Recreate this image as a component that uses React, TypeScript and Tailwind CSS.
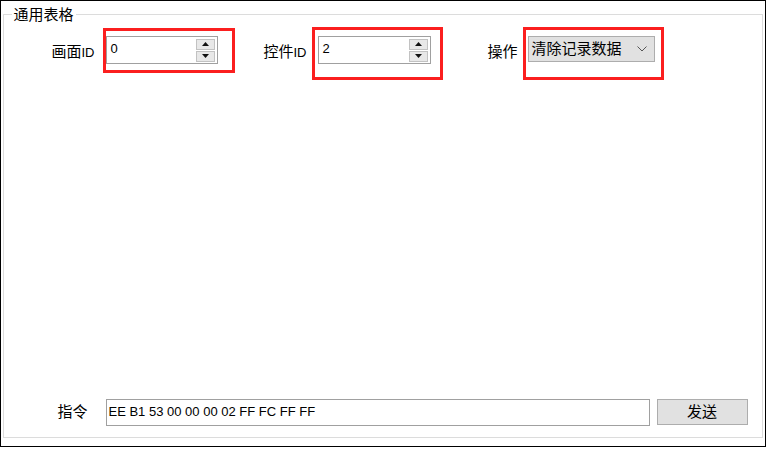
import { useState } from 'react';

const font = { fontFamily: '"Liberation Sans", "Noto Sans CJK SC", sans-serif' };

function SpinBox({ value, width }: { value: string; width: string }) {
  return (
    <div className={`flex h-[28px] ${width} border border-[#a0a0a0] bg-white`}>
      <div className="flex-1 pl-[4px] pt-[4px] text-[13px] leading-[16px] text-black">{value}</div>
      {/* up / down buttons */}
      <div className="mr-[2px] mt-[2px] flex w-[19px] flex-col gap-px">
        <div className="flex h-[11px] items-center justify-center border border-[#c2c2c2] bg-[#e8e8e8]">
          <svg width="7" height="4" viewBox="0 0 7 4"><path d="M3.5 0 L7 4 L0 4 Z" fill="#111" /></svg>
        </div>
        <div className="flex h-[11px] items-center justify-center border border-[#c2c2c2] bg-[#e8e8e8]">
          <svg width="7" height="4" viewBox="0 0 7 4"><path d="M0 0 L7 0 L3.5 4 Z" fill="#111" /></svg>
        </div>
      </div>
    </div>
  );
}

export default function App() {
  const [cmd] = useState('EE B1 53 00 00 00 02 FF FC FF FF');

  return (
    <div className="h-[450px] w-[767px] bg-white" style={font}>
      <div className="box-border h-[447px] w-[766px] border-[1.5px] border-black">
        <fieldset className="ml-[1.5px] mt-[5.5px] h-[431px] w-[760px] border border-[#dcdcdc]">
          <legend className="ml-[8px] px-[2px] text-[15px] leading-[16px] text-black">通用表格</legend>

          <div className="flex h-[413px] flex-col justify-between pb-[10px]">
            {/* Top row of controls */}
            <div className="mt-[13px] flex items-start text-[15px] text-black">
              <div className="mr-[11px] mt-[2px] w-[91px] text-right leading-[28px]">
                画面<span className="text-[13px]">ID</span>
              </div>
              <div className="relative">
                <SpinBox value="0" width="w-[112px]" />
                <div className="absolute left-[-3px] top-[-8px] h-[45px] w-[132px] border-[3px] border-[#fb1f1f]" />
              </div>

              <div className="mr-[11px] mt-[2px] w-[89px] text-right leading-[28px]">
                控件<span className="text-[13px]">ID</span>
              </div>
              <div className="relative">
                <SpinBox value="2" width="w-[113px]" />
                <div className="absolute left-[-6px] top-[-9px] h-[53px] w-[131px] border-[3px] border-[#fb1f1f]" />
              </div>

              <div className="mr-[10px] mt-[2px] w-[87px] text-right leading-[28px]">操作</div>
              <div className="relative">
                <div className="flex h-[26px] w-[127px] items-center justify-between border border-[#adadad] bg-[#e1e1e1] pl-[3px] pr-[7px]">
                  <span className="text-[15px] leading-[18px]">清除记录数据</span>
                  <svg width="10" height="6" viewBox="0 0 10 6">
                    <path d="M0.5 0.5 L5 5 L9.5 0.5" fill="none" stroke="#555" strokeWidth="1" />
                  </svg>
                </div>
                <div className="absolute left-[-5px] top-[-9px] h-[53px] w-[141px] border-[3px] border-[#fb1f1f]" />
              </div>
            </div>

            {/* Command row */}
            <div className="flex items-center text-black">
              <div className="mr-[18px] w-[84px] text-right text-[15px] leading-[20px]">指令</div>
              <div className="flex h-[27px] w-[544px] items-center border border-[#a0a0a0] bg-white pl-[2px] text-[13px]">
                {cmd}
              </div>
              <button className="ml-[7px] h-[26px] w-[91px] border border-[#adadad] bg-[#e1e1e1] text-[15px] leading-[18px] text-black">
                发送
              </button>
            </div>
          </div>
        </fieldset>
      </div>
    </div>
  );
}
